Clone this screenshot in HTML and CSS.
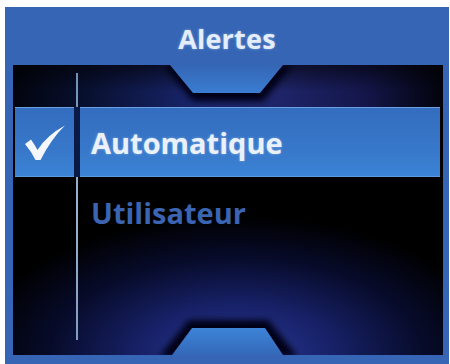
FILE: index.html
```html
<!DOCTYPE html>
<html>
<head>
<meta charset="utf-8">
<link rel="stylesheet" href="styles.css">
</head>
<body>
<div class="screen">
  <div class="title">Alertes</div>
  <div class="panel">
    <svg class="deco" width="430" height="290" viewBox="0 0 430 290">
      <defs>
        <filter id="blur" x="-20%" y="-50%" width="140%" height="200%">
          <feGaussianBlur stdDeviation="3"/>
        </filter>
        <linearGradient id="ntop" x1="0" y1="0" x2="0" y2="1">
          <stop offset="0" stop-color="#3566b5"/>
          <stop offset="1" stop-color="#3a7dd2"/>
        </linearGradient>
        <linearGradient id="nbot" x1="0" y1="0" x2="0" y2="1">
          <stop offset="0" stop-color="#3c84d8"/>
          <stop offset="1" stop-color="#3568b8"/>
        </linearGradient>
        <linearGradient id="sep" x1="0" y1="0" x2="0" y2="1">
          <stop offset="0" stop-color="#6e8fb8"/>
          <stop offset="0.5" stop-color="#9bb3d0"/>
          <stop offset="1" stop-color="#7f9cc2"/>
        </linearGradient>
      </defs>
      <polygon points="150,0 280,0 250,36 180,36" fill="#000018" filter="url(#blur)"/>
      <polygon points="157,0 270,0 247,28 180,28" fill="url(#ntop)"/>
      <polygon points="176,255 255,255 285,292 146,292" fill="#000018" filter="url(#blur)"/>
      <polygon points="179,263 252,263 270,290 159,290" fill="url(#nbot)"/>
      <rect x="63" y="8" width="2" height="267" fill="url(#sep)"/>
    </svg>
    <div class="list">
      <div class="row selected">
        <div class="mark">
          <svg width="40" height="36" viewBox="0 0 40 36">
            <path d="M0 19 L6 14.5 Q9.5 19.5 12.5 25 Q22 10 40 0.5 Q26.5 13.5 15.5 35 L10.5 35 Q6 26 0 19 Z" fill="#f4f8fd"/>
          </svg>
        </div>
        <div class="gap"></div>
        <div class="label">Automatique</div>
      </div>
      <div class="row">
        <div class="mark"></div>
        <div class="gap"></div>
        <div class="label">Utilisateur</div>
      </div>
    </div>
  </div>
</div>
</body>
</html>
```
FILE: styles.css
```css
html, body {
  margin: 0;
  padding: 0;
  background: #ffffff;
}

.screen {
  margin: 7px 1px 0 5px;
  width: 444px;
  height: 357px;
  background: #3565b4;
  display: flex;
  flex-direction: column;
  font-family: "Open Sans", "DejaVu Sans", sans-serif;
  font-weight: 700;
}

.title {
  height: 58px;
  box-sizing: border-box;
  padding-top: 15px;
  text-align: center;
  font-size: 27px;
  line-height: 34px;
  color: #e4edf9;
  text-shadow: 0 0 3px rgba(200, 225, 255, 0.5);
  letter-spacing: 0.2px;
}

.panel {
  position: relative;
  margin-left: 8px;
  width: 430px;
  height: 290px;
  background:
    linear-gradient(180deg, rgba(0,0,0,0.55) 0px, rgba(0,0,0,0) 26px, rgba(0,0,0,0) 42px, rgba(0,0,0,0) 100%),
    linear-gradient(90deg, #02040e 0%, #081030 17%, #18246a 42%, #1e2468 62%, #14164a 82%, #02030c 100%) 0 0 / 100% 42px no-repeat,
    radial-gradient(ellipse 62% 48% at 52% 100%, #2a3a98 0%, #18226a 35%, #070b2a 70%, #000 100%);
  background-color: #000;
  overflow: hidden;
}

.deco {
  position: absolute;
  left: 0;
  top: 0;
}

.list {
  position: relative;
  padding-top: 42px;
}

.row {
  display: grid;
  grid-template-columns: 59px 6px 360px;
  margin-left: 2px;
  height: 70px;
}

.row .mark {
  display: flex;
  align-items: center;
  justify-content: center;
  padding-top: 2px;
}

.row.selected .mark,
.row.selected .label {
  background: linear-gradient(180deg, #346dbf 0%, #3777c9 60%, #3c84d6 100%);
  box-shadow: inset 0 1px 0 #6b9fe0, inset 0 -1px 0 #5d98dc;
}

.row.selected .gap {
  background: #0a1a44;
}

.label {
  display: flex;
  align-items: center;
  padding-left: 11px;
  font-size: 29px;
  line-height: 1;
  color: #3b64b2;
}

.row.selected .label {
  color: #eaf1fb;
  text-shadow: 0 0 3px rgba(210, 230, 255, 0.45);
}
```
